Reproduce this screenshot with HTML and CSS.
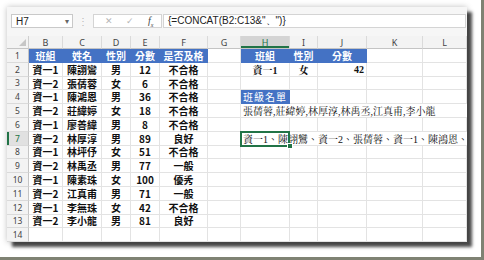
FILE: index.html
```html
<!DOCTYPE html>
<html lang="zh-Hant">
<head>
  <meta charset="UTF-8">
  <title>CONCAT</title>
  <link rel="stylesheet" href="styles.css">
</head>
<body>
<div class="frame">
  <div class="window">
    <div class="formula-bar">
      <div class="namebox">H7<span class="arrow">▾</span></div>
      <span class="dots">⋮</span>
      <div class="fx-box">
        <span class="btn">✕</span>
        <span class="btn">✓</span>
        <span class="fx">f<sub>x</sub></span>
      </div>
      <div class="formula">{=CONCAT(B2:C13&amp;"、")}</div>
    </div>

    <div class="sheet">
      <div class="row">
        <div class="corner"><span class="tri"></span></div>
        <div class="hd">B</div><div class="hd">C</div><div class="hd">D</div><div class="hd">E</div>
        <div class="hd">F</div><div class="hd">G</div><div class="hd active">H</div><div class="hd">I</div>
        <div class="hd">J</div><div class="hd">K</div><div class="hd">L</div>
      </div>
      <div class="row">
        <div class="rn">1</div>
        <div class="c th">班組</div><div class="c th">姓名</div><div class="c th">性別</div><div class="c th">分數</div><div class="c th">是否及格</div>
        <div class="c"></div>
        <div class="c th">班組</div><div class="c th">性別</div><div class="c th">分數</div>
        <div class="c"></div><div class="c"></div>
      </div>
      <div class="row">
        <div class="rn">2</div>
        <div class="c">資一1</div><div class="c">陳詡鸞</div><div class="c">男</div><div class="c">12</div><div class="c">不合格</div>
        <div class="c"></div>
        <div class="c serif strong">資一1</div><div class="c serif strong">女</div><div class="c serif strong num">42</div>
        <div class="c"></div><div class="c"></div>
      </div>
      <div class="row">
        <div class="rn">3</div>
        <div class="c">資一2</div><div class="c">張蒨蓉</div><div class="c">女</div><div class="c">6</div><div class="c">不合格</div>
        <div class="c"></div><div class="c"></div><div class="c"></div><div class="c"></div><div class="c"></div><div class="c"></div>
      </div>
      <div class="row">
        <div class="rn">4</div>
        <div class="c">資一1</div><div class="c">陳鴻恩</div><div class="c">男</div><div class="c">36</div><div class="c">不合格</div>
        <div class="c"></div>
        <div class="c th label">班級名單</div>
        <div class="c"></div><div class="c"></div><div class="c"></div><div class="c"></div>
      </div>
      <div class="row">
        <div class="rn">5</div>
        <div class="c">資一2</div><div class="c">莊緯婷</div><div class="c">女</div><div class="c">18</div><div class="c">不合格</div>
        <div class="c"></div>
        <div class="c serif spill">張蒨蓉,莊緯婷,林厚淳,林禹丞,江真甫,李小龍</div>
      </div>
      <div class="row">
        <div class="rn">6</div>
        <div class="c">資一1</div><div class="c">廖善緯</div><div class="c">男</div><div class="c">8</div><div class="c">不合格</div>
        <div class="c"></div><div class="c"></div><div class="c"></div><div class="c"></div><div class="c"></div><div class="c"></div>
      </div>
      <div class="row">
        <div class="rn current">7</div>
        <div class="c">資一2</div><div class="c">林厚淳</div><div class="c">男</div><div class="c">89</div><div class="c">良好</div>
        <div class="c"></div>
        <div class="c serif spill selected">資一1、陳詡鸞、資一2、張蒨蓉、資一1、陳鴻恩、</div>
      </div>
      <div class="row">
        <div class="rn">8</div>
        <div class="c">資一1</div><div class="c">林坪伃</div><div class="c">女</div><div class="c">51</div><div class="c">不合格</div>
        <div class="c"></div><div class="c"></div><div class="c"></div><div class="c"></div><div class="c"></div><div class="c"></div>
      </div>
      <div class="row">
        <div class="rn">9</div>
        <div class="c">資一2</div><div class="c">林禹丞</div><div class="c">男</div><div class="c">77</div><div class="c">一般</div>
        <div class="c"></div><div class="c"></div><div class="c"></div><div class="c"></div><div class="c"></div><div class="c"></div>
      </div>
      <div class="row">
        <div class="rn">10</div>
        <div class="c">資一1</div><div class="c">陳素珠</div><div class="c">女</div><div class="c">100</div><div class="c">優秀</div>
        <div class="c"></div><div class="c"></div><div class="c"></div><div class="c"></div><div class="c"></div><div class="c"></div>
      </div>
      <div class="row">
        <div class="rn">11</div>
        <div class="c">資一2</div><div class="c">江真甫</div><div class="c">男</div><div class="c">71</div><div class="c">一般</div>
        <div class="c"></div><div class="c"></div><div class="c"></div><div class="c"></div><div class="c"></div><div class="c"></div>
      </div>
      <div class="row">
        <div class="rn">12</div>
        <div class="c">資一1</div><div class="c">李無珠</div><div class="c">女</div><div class="c">42</div><div class="c">不合格</div>
        <div class="c"></div><div class="c"></div><div class="c"></div><div class="c"></div><div class="c"></div><div class="c"></div>
      </div>
      <div class="row">
        <div class="rn">13</div>
        <div class="c">資一2</div><div class="c">李小龍</div><div class="c">男</div><div class="c">81</div><div class="c">良好</div>
        <div class="c"></div><div class="c"></div><div class="c"></div><div class="c"></div><div class="c"></div><div class="c"></div>
      </div>
      <div class="row">
        <div class="rn">14</div>
        <div class="c"></div><div class="c"></div><div class="c"></div><div class="c"></div><div class="c"></div><div class="c"></div>
        <div class="c"></div><div class="c"></div><div class="c"></div><div class="c"></div><div class="c"></div>
      </div>
    </div>
  </div>
</div>
</body>
</html>
```

FILE: styles.css
```css
body {
  margin: 0;
  background-color: #ffffff;
  font-family: "Noto Sans CJK TC", sans-serif;
}

.frame {
  width: 484px;
  height: 260px;
  box-sizing: border-box;
  padding: 7px 0 0 7px;
  border-right: 3px solid #7f8273;
  border-bottom: 3px solid #7f8273;
  overflow: hidden;
}

.window {
  width: 460px;
  height: 235px;
  background-color: #ffffff;
  display: flex;
  flex-direction: column;
  box-shadow: 5px 5px 3px rgba(0, 0, 0, 0.7), 0 0 6px rgba(0, 0, 0, 0.25);
  overflow: hidden;
}

/* formula bar */
.formula-bar {
  height: 29px;
  box-sizing: border-box;
  padding: 7px 1px 8px 4px;
  display: flex;
  align-items: stretch;
  background-color: #f6f6f6;
  font-family: "Liberation Sans", Arial, sans-serif;
  font-size: 10px;
  color: #222;
}

.namebox {
  width: 62px;
  box-sizing: border-box;
  border: 1px solid #c9c9c9;
  background-color: #ffffff;
  display: flex;
  align-items: center;
  justify-content: space-between;
  padding: 0 3px 0 4px;
}

.arrow {
  font-size: 8px;
  color: #666;
}

.dots {
  width: 20px;
  display: flex;
  align-items: center;
  justify-content: center;
  color: #b8b8b8;
  font-size: 10px;
}

.fx-box {
  width: 69px;
  box-sizing: border-box;
  border: 1px solid #d4d4d4;
  background-color: #ffffff;
  display: flex;
  align-items: center;
  padding-left: 10px;
  gap: 12px;
}

.btn {
  color: #b5b5b5;
  font-size: 9px;
  width: 9px;
  text-align: center;
}

.fx {
  font-family: "Liberation Serif", serif;
  font-style: italic;
  font-size: 10px;
  color: #444;
  margin-left: 2px;
}

.fx sub {
  font-size: 6px;
}

.formula {
  flex: 1;
  margin-left: 1px;
  box-sizing: border-box;
  border: 1px solid #d4d4d4;
  background-color: #ffffff;
  display: flex;
  align-items: center;
  padding-left: 4px;
  white-space: nowrap;
}

/* sheet */
.sheet {
  display: grid;
  grid-template-columns: 22px 34px 39px 29px 29px 48px 33px 49px 28px 49px 56px 44px;
  grid-template-rows: 13px repeat(14, 13.8px);
}

.row {
  display: contents;
}

.corner,
.hd,
.rn,
.c {
  box-sizing: border-box;
  display: flex;
  align-items: center;
  justify-content: center;
  white-space: nowrap;
}

.corner {
  position: relative;
  background-color: #f3f3f3;
  border-right: 1px solid #cfcfcf;
  border-bottom: 1px solid #c4c4c4;
}

.tri {
  position: absolute;
  right: 2px;
  bottom: 2px;
  width: 0;
  height: 0;
  border-left: 7px solid transparent;
  border-bottom: 7px solid #c6c6c6;
}

.hd {
  background-color: #f3f3f3;
  border-right: 1px solid #dadada;
  border-bottom: 1px solid #c4c4c4;
  font-family: "Noto Sans", sans-serif;
  font-size: 9px;
  color: #444;
}

.hd.active {
  background-color: #d4d4d4;
  color: #217346;
  box-shadow: inset 0 -2px 0 #217346;
}

.rn {
  background-color: #f3f3f3;
  border-right: 1px solid #c4c4c4;
  border-bottom: 1px solid #dadada;
  font-family: "Noto Sans", sans-serif;
  font-size: 8.5px;
  color: #444;
}

.rn.current {
  background-color: #e1e1e1;
  color: #217346;
  box-shadow: inset 2px 0 0 #217346;
}

.c {
  border-right: 1px solid #e3e3e3;
  border-bottom: 1px solid #e3e3e3;
  font-size: 10px;
  font-weight: bold;
  color: #111;
}

.th {
  background-color: #4472c4;
  border-right-color: #4472c4;
  border-bottom-color: #4472c4;
  color: #ffffff;
}

.th.label {
  font-weight: normal;
  letter-spacing: 1px;
}

.serif {
  font-family: "Liberation Serif", "Noto Serif CJK TC", "Noto Sans CJK TC", serif;
  font-weight: normal;
}

.serif.strong {
  font-weight: bold;
}

.num {
  justify-content: flex-end;
  padding-right: 2px;
}

.spill {
  grid-column: span 5;
  justify-content: flex-start;
  padding-left: 2px;
  border-right: none;
}

.selected {
  position: relative;
}

.selected::after {
  content: "";
  position: absolute;
  left: -1px;
  top: -1px;
  width: 50px;
  height: 15.8px;
  box-sizing: border-box;
  border: 2px solid #217346;
}

.selected::before {
  content: "";
  position: absolute;
  left: 46px;
  top: 11px;
  width: 4px;
  height: 4px;
  background-color: #217346;
  border: 1px solid #ffffff;
  z-index: 1;
}
```
